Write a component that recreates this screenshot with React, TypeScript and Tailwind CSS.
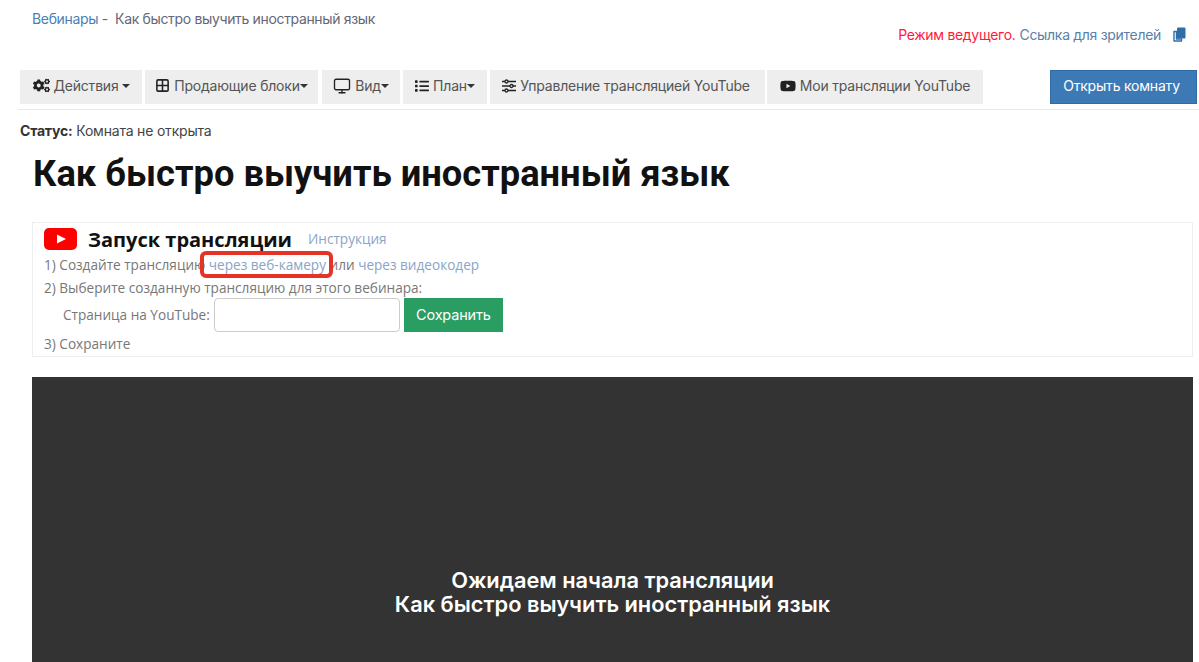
import React from "react";
import { FaCogs, FaList, FaYoutube } from "react-icons/fa";
import { Grid2x2, Monitor } from "lucide-react";

function Caret({ tight }: { tight?: boolean }) {
  return (
    <span
      className={`inline-block h-0 w-0 border-x-[4px] border-t-[4px] border-x-transparent border-t-[#333] ${tight ? "ml-0" : "ml-[3px]"}`}
    />
  );
}

function SlidersIcon() {
  return (
    <svg width="14" height="14" viewBox="0 0 14 14" fill="none" stroke="#222" strokeWidth="1.3">
      <path d="M0 2.5H3M6 2.5H14M0 7H8M11 7H14M0 11.5H3M6 11.5H14" />
      <circle cx="4.5" cy="2.5" r="1.5" />
      <circle cx="9.5" cy="7" r="1.5" />
      <circle cx="4.5" cy="11.5" r="1.5" />
    </svg>
  );
}

function CopyIcon() {
  return (
    <svg width="13" height="15" viewBox="0 0 13 15" className="ml-[12px] mt-[1px]">
      <path d="M1 4.5H3.5V12H8.5V14H1Z" fill="#fff" stroke="#2f6fa8" strokeWidth="1.4" strokeLinejoin="round" />
      <rect x="4" y="0.5" width="8.5" height="11" rx="1" fill="#2f6fa8" />
    </svg>
  );
}

function ToolButton({ width, icon, label, caret, tight }: { width: string; icon: React.ReactNode; label: string; caret?: boolean; tight?: boolean }) {
  return (
    <button className={`flex h-[34px] items-center justify-center bg-[#eeeeee] pb-[3px] text-[14px] tracking-[-0.2px] text-[#555] ${width}`}>
      <span className="mr-1 flex items-center text-[#222]">{icon}</span>
      {label}
      {caret && <Caret tight={tight} />}
    </button>
  );
}

export default function App() {
  return (
    <div className="h-[662px] overflow-hidden bg-white font-['Inter','Noto_Sans',sans-serif] text-[#444]">
      {/* шапка */}
      <div className="flex h-[70px] justify-between pl-8 pr-[13px]">
        <div className="pt-[10px] text-[14px] leading-[18px] tracking-[-0.34px] text-[#667]">
          <a className="text-[#4a7fb5]">Вебинары</a> -&nbsp; Как быстро выучить иностранный язык
        </div>
        <div className="flex items-start pt-[26px] text-[14px] leading-[18px] tracking-[-0.3px]">
          <span className="text-[#ff1a3c]">Режим ведущего.</span>
          <a className="ml-1 text-[#5a7fa8]">Ссылка для зрителей</a>
          <CopyIcon />
        </div>
      </div>

      {/* тулбар */}
      <div className="ml-[18px] flex border-b border-[#e8e8e8] pb-[5px] pl-[2px] pr-[2px]">
        <div className="flex gap-[3px]">
          <ToolButton width="w-[122px]" icon={<FaCogs className="text-[17px]" />} label="Действия" caret />
          <ToolButton width="w-[173px] mr-[1px]" icon={<Grid2x2 size={15} strokeWidth={2.5} />} label="Продающие блоки" caret tight />
          <ToolButton width="w-[78px]" icon={<Monitor size={18} strokeWidth={1.8} />} label="Вид" caret tight />
          <ToolButton width="w-[84px]" icon={<FaList className="text-[14px]" />} label="План" caret tight />
          <ToolButton width="w-[275px] mr-[-1px] pr-[3px]" icon={<SlidersIcon />} label="Управление трансляцией YouTube" />
          <ToolButton width="w-[216px]" icon={<FaYoutube className="text-[16px]" />} label="Мои трансляции YouTube" />
        </div>
        <button className="ml-auto h-[34px] w-[147px] border border-[#2e6da4] bg-[#3d7ab5] pb-[3px] pr-[4px] text-[14px] tracking-[-0.2px] text-white">
          Открыть комнату
        </button>
      </div>

      <div className="ml-5 mt-[12px] text-[14px] leading-[17px] tracking-[-0.2px] text-[#444]">
        <b className="font-bold text-[#333]">Статус:</b> Комната не открыта
      </div>

      <h1 className="ml-[33px] mt-[13px] font-['Roboto',sans-serif] text-[36.3px] font-bold leading-[43px] text-[#111]">
        Как быстро выучить иностранный язык
      </h1>

      {/* запуск трансляции */}
      <div className="ml-8 mr-[6px] mt-[27px] h-[135px] border border-[#eeeeee] pl-[11px] pt-[1px] font-['Open_Sans',sans-serif] text-[13.6px] text-[#777]">
        <div className="flex h-[31px] items-center">
          <svg width="33" height="22" viewBox="0 0 33 22" className="mt-[-1px]">
            <rect width="33" height="22" rx="5" fill="#ff0000" />
            <path d="M13 6.5 L22 11 L13 15.5 Z" fill="#fff" />
          </svg>
          <span className="ml-[11px] text-[20px] font-bold text-[#111]">Запуск трансляции</span>
          <a className="ml-4 text-[#8aa4c8]">Инструкция</a>
        </div>
        <div className="leading-[20px]">
          1) Создайте трансляцию{" "}
          <span className="relative">
            <a className="text-[#8aa4c8]">через веб-камеру</a>
            <span className="absolute left-[-9px] top-[-4px] h-[27px] w-[133px] rounded-[6px] border-[4px] border-[#e53327]" />
          </span>{" "}
          или <a className="text-[#8aa4c8]">через видеокодер</a>
        </div>
        <div className="mt-[3px] leading-[20px]">2) Выберите созданную трансляцию для этого вебинара:</div>
        <div className="flex items-center pl-[19px]">
          <span>Страница на YouTube:</span>
          <input className="ml-1 h-[34px] w-[186px] rounded-[4px] border border-[#cccccc] bg-white" />
          <button className="ml-1 h-[34px] w-[99px] bg-[#2a9d63] font-['Inter',sans-serif] text-[14.5px] tracking-[-0.2px] text-white">
            Сохранить
          </button>
        </div>
        <div className="mt-[2px] leading-[20px]">3) Сохраните</div>
      </div>

      {/* плеер */}
      <div className="ml-8 mr-[6px] mt-5 flex h-[400px] items-start justify-center bg-[#333333] pt-[191px] text-center text-[21.8px] font-semibold leading-[24px] text-white">
        <div>
          Ожидаем начала трансляции
          <br />
          Как быстро выучить иностранный язык
        </div>
      </div>
    </div>
  );
}
